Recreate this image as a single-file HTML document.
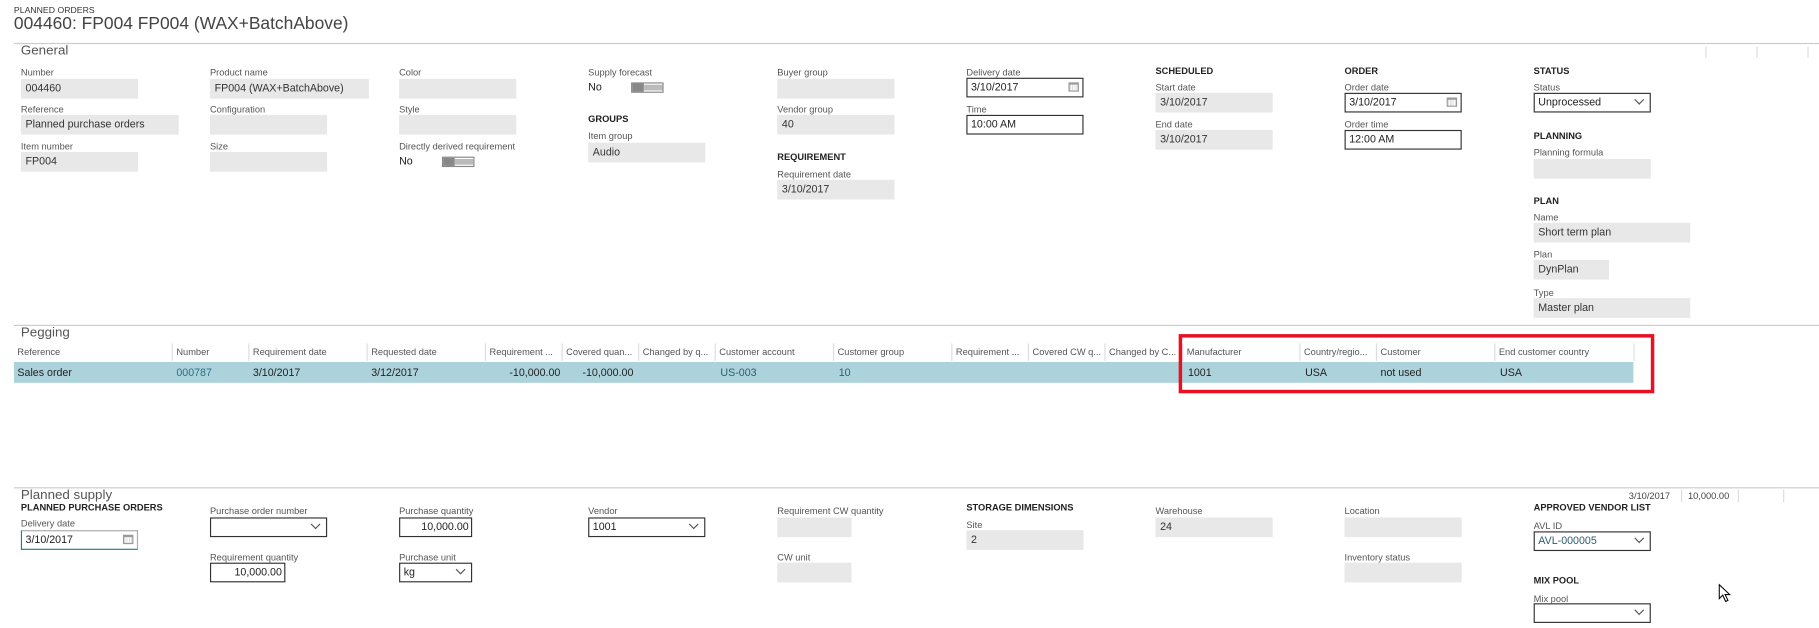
<!DOCTYPE html>
<html><head><meta charset="utf-8">
<style>
html,body{margin:0;padding:0;background:#fff;overflow:hidden;width:1819px;height:627px}
#w{position:absolute;left:0;top:0;width:1568px;height:541px;transform:scale(1.1601);transform-origin:0 0;font-family:"Liberation Sans",sans-serif;color:#222}
#w div{position:absolute;white-space:nowrap}
.l{font-size:8px;color:#555;line-height:10px}
.h{font-size:8px;font-weight:bold;color:#222;line-height:10px}
.b{background:#e8e8e8;height:17px;font-size:9.2px;line-height:17px;padding-left:4px;box-sizing:border-box;color:#333}
.i{border:1px solid #333;height:17px;font-size:9.2px;line-height:15px;padding-left:3px;box-sizing:border-box;background:#fff}
.hr{height:1px;background:#ccc}
.sec{font-size:11.5px;color:#555}
.cal{right:3px;top:3px;width:9px;height:8px;border:1px solid #999;border-top:2px solid #999;box-sizing:border-box;background:repeating-linear-gradient(90deg,#ddd 0 1px,#fff 1px 2px)}
.dd{right:6px;top:2px;width:5px;height:5px;border-right:1px solid #555;border-bottom:1px solid #555;transform:rotate(45deg)}
.tg{width:28px;height:9px;border:1px solid #888;box-sizing:border-box}
.tg::before{content:"";position:absolute;left:0;top:0;width:10px;height:7px;background:#888}
.tg::after{content:"";position:absolute;left:10px;top:1px;width:16px;height:5px;background:#bbb}
.gh{font-size:8px;color:#555;top:296px;height:15px;line-height:15px;border-left:1px solid #ddd;padding-left:3px}
.gr{font-size:9.2px;top:312px;height:18px;line-height:18px}
</style></head><body><div id="w">
<div class="l" style="left:12px;top:4px;font-size:7.5px;color:#333">PLANNED ORDERS</div>
<div style="left:12px;top:12px;font-size:15px;color:#444">004460: FP004 FP004 (WAX+BatchAbove)</div>
<div class="hr" style="left:12px;top:37px;width:1556px"></div>
<div class="sec" style="left:18px;top:38px">General</div>
<div style="left:1470px;top:40px;width:1px;height:10px;background:#ddd"></div>
<div style="left:1514px;top:40px;width:1px;height:10px;background:#ddd"></div>
<div style="left:1558px;top:40px;width:1px;height:10px;background:#ddd"></div>

<div class="l" style="left:18px;top:58px">Number</div><div class="b" style="left:18px;top:68px;width:101px">004460</div>
<div class="l" style="left:18px;top:90px">Reference</div><div class="b" style="left:18px;top:99px;width:136px">Planned purchase orders</div>
<div class="l" style="left:18px;top:122px">Item number</div><div class="b" style="left:18px;top:131px;width:101px">FP004</div>

<div class="l" style="left:181px;top:58px">Product name</div><div class="b" style="left:181px;top:68px;width:137px">FP004 (WAX+BatchAbove)</div>
<div class="l" style="left:181px;top:90px">Configuration</div><div class="b" style="left:181px;top:99px;width:101px"></div>
<div class="l" style="left:181px;top:122px">Size</div><div class="b" style="left:181px;top:131px;width:101px"></div>

<div class="l" style="left:344px;top:58px">Color</div><div class="b" style="left:344px;top:68px;width:101px"></div>
<div class="l" style="left:344px;top:90px">Style</div><div class="b" style="left:344px;top:99px;width:101px"></div>
<div class="l" style="left:344px;top:122px">Directly derived requirement</div>
<div style="left:344px;top:134px;font-size:9.2px">No</div><div class="tg" style="left:381px;top:135px"></div>

<div class="l" style="left:507px;top:58px">Supply forecast</div>
<div style="left:507px;top:70px;font-size:9.2px">No</div><div class="tg" style="left:544px;top:71px"></div>
<div class="h" style="left:507px;top:98px">GROUPS</div>
<div class="l" style="left:507px;top:113px">Item group</div><div class="b" style="left:507px;top:123px;width:101px">Audio</div>

<div class="l" style="left:670px;top:58px">Buyer group</div><div class="b" style="left:670px;top:68px;width:101px"></div>
<div class="l" style="left:670px;top:90px">Vendor group</div><div class="b" style="left:670px;top:99px;width:101px">40</div>
<div class="h" style="left:670px;top:131px">REQUIREMENT</div>
<div class="l" style="left:670px;top:146px">Requirement date</div><div class="b" style="left:670px;top:155px;width:101px">3/10/2017</div>

<div class="l" style="left:833px;top:58px">Delivery date</div><div class="i" style="left:833px;top:67px;width:101px">3/10/2017<div class="cal"></div></div>
<div class="l" style="left:833px;top:90px">Time</div><div class="i" style="left:833px;top:99px;width:101px">10:00 AM</div>

<div class="h" style="left:996px;top:57px">SCHEDULED</div>
<div class="l" style="left:996px;top:71px">Start date</div><div class="b" style="left:996px;top:80px;width:101px">3/10/2017</div>
<div class="l" style="left:996px;top:103px">End date</div><div class="b" style="left:996px;top:112px;width:101px">3/10/2017</div>

<div class="h" style="left:1159px;top:57px">ORDER</div>
<div class="l" style="left:1159px;top:71px">Order date</div><div class="i" style="left:1159px;top:80px;width:101px">3/10/2017<div class="cal"></div></div>
<div class="l" style="left:1159px;top:103px">Order time</div><div class="i" style="left:1159px;top:112px;width:101px">12:00 AM</div>

<div class="h" style="left:1322px;top:57px">STATUS</div>
<div class="l" style="left:1322px;top:71px">Status</div><div class="i" style="left:1322px;top:80px;width:101px">Unprocessed<div class="dd"></div></div>
<div class="h" style="left:1322px;top:113px">PLANNING</div>
<div class="l" style="left:1322px;top:127px">Planning formula</div><div class="b" style="left:1322px;top:137px;width:101px"></div>
<div class="h" style="left:1322px;top:169px">PLAN</div>
<div class="l" style="left:1322px;top:183px">Name</div><div class="b" style="left:1322px;top:192px;width:135px">Short term plan</div>
<div class="l" style="left:1322px;top:215px">Plan</div><div class="b" style="left:1322px;top:224px;width:65px">DynPlan</div>
<div class="l" style="left:1322px;top:248px">Type</div><div class="b" style="left:1322px;top:257px;width:135px">Master plan</div>

<div class="hr" style="left:12px;top:280px;width:1556px"></div>
<div class="sec" style="left:18px;top:281px">Pegging</div>
<div style="left:12px;top:312px;width:1396px;height:18px;background:#acd3db"></div>
<div class="gh" style="left:12px;border:0">Reference</div>
<div class="gh" style="left:148px">Number</div>
<div class="gh" style="left:214px">Requirement date</div>
<div class="gh" style="left:316px">Requested date</div>
<div class="gh" style="left:418px">Requirement ...</div>
<div class="gh" style="left:484px">Covered quan...</div>
<div class="gh" style="left:550px">Changed by q...</div>
<div class="gh" style="left:616px">Customer account</div>
<div class="gh" style="left:718px">Customer group</div>
<div class="gh" style="left:820px">Requirement ...</div>
<div class="gh" style="left:886px">Covered CW q...</div>
<div class="gh" style="left:952px">Changed by C...</div>
<div class="gh" style="left:1019px">Manufacturer</div>
<div class="gh" style="left:1120px">Country/regio...</div>
<div class="gh" style="left:1186px">Customer</div>
<div class="gh" style="left:1288px">End customer country</div>
<div style="left:1408px;top:296px;width:1px;height:15px;background:#ddd"></div>
<div class="gr" style="left:15px">Sales order</div>
<div class="gr" style="left:152px;color:#2c6f86">000787</div>
<div class="gr" style="left:218px">3/10/2017</div>
<div class="gr" style="left:320px">3/12/2017</div>
<div class="gr" style="left:430px;width:53px;text-align:right">-10,000.00</div>
<div class="gr" style="left:493px;width:53px;text-align:right">-10,000.00</div>
<div class="gr" style="left:621px;color:#2c5f70">US-003</div>
<div class="gr" style="left:723px;color:#2c5f70">10</div>
<div class="gr" style="left:1024px">1001</div>
<div class="gr" style="left:1125px">USA</div>
<div class="gr" style="left:1190px">not used</div>
<div class="gr" style="left:1293px">USA</div>
<div style="left:1016px;top:288px;width:410px;height:51px;border:3px solid #e81123;box-sizing:border-box"></div>

<div class="hr" style="left:12px;top:420px;width:1556px"></div>
<div class="sec" style="left:18px;top:421px">Planned supply</div>
<div style="left:1404px;top:423px;font-size:8px;color:#444">3/10/2017</div>
<div style="left:1449px;top:422px;width:1px;height:11px;background:#ddd"></div>
<div style="left:1455px;top:423px;font-size:8px;color:#444">10,000.00</div>
<div style="left:1498px;top:422px;width:1px;height:11px;background:#ddd"></div>
<div style="left:1537px;top:422px;width:1px;height:11px;background:#ddd"></div>

<div class="h" style="left:18px;top:433px">PLANNED PURCHASE ORDERS</div>
<div class="l" style="left:18px;top:447px">Delivery date</div>
<div class="i" style="left:18px;top:457px;width:101px;border-color:#aaa;border-bottom:1px solid #1e7f8e;border-left:1px solid #1e7f8e">3/10/2017<div class="cal"></div></div>

<div class="l" style="left:181px;top:436px">Purchase order number</div><div class="i" style="left:181px;top:446px;width:101px"><div class="dd"></div></div>
<div class="l" style="left:181px;top:476px">Requirement quantity</div><div class="i" style="left:181px;top:485px;width:65px;text-align:right;padding-right:2px">10,000.00</div>

<div class="l" style="left:344px;top:436px">Purchase quantity</div><div class="i" style="left:344px;top:446px;width:63px;text-align:right;padding-right:2px">10,000.00</div>
<div class="l" style="left:344px;top:476px">Purchase unit</div><div class="i" style="left:344px;top:485px;width:63px">kg<div class="dd"></div></div>

<div class="l" style="left:507px;top:436px">Vendor</div><div class="i" style="left:507px;top:446px;width:101px">1001<div class="dd"></div></div>

<div class="l" style="left:670px;top:436px">Requirement CW quantity</div><div class="b" style="left:670px;top:446px;width:64px"></div>
<div class="l" style="left:670px;top:476px">CW unit</div><div class="b" style="left:670px;top:485px;width:64px"></div>

<div class="h" style="left:833px;top:433px">STORAGE DIMENSIONS</div>
<div class="l" style="left:833px;top:448px">Site</div><div class="b" style="left:833px;top:457px;width:101px">2</div>

<div class="l" style="left:996px;top:436px">Warehouse</div><div class="b" style="left:996px;top:446px;width:101px">24</div>
<div class="l" style="left:1159px;top:436px">Location</div><div class="b" style="left:1159px;top:446px;width:101px"></div>
<div class="l" style="left:1159px;top:476px">Inventory status</div><div class="b" style="left:1159px;top:485px;width:101px"></div>

<div class="h" style="left:1322px;top:433px">APPROVED VENDOR LIST</div>
<div class="l" style="left:1322px;top:449px">AVL ID</div><div class="i" style="left:1322px;top:458px;width:101px;color:#2c5f70">AVL-000005<div class="dd"></div></div>
<div class="h" style="left:1322px;top:496px">MIX POOL</div>
<div class="l" style="left:1322px;top:512px">Mix pool</div><div class="i" style="left:1322px;top:520px;width:101px"><div class="dd"></div></div>

<svg style="position:absolute;left:1481px;top:503px" width="12" height="18" viewBox="0 0 12 18"><path d="M1 1 L1 13 L4 10 L6.5 15.5 L8.5 14.5 L6 9.5 L10 9.5 Z" fill="#fff" stroke="#000" stroke-width="0.9"/></svg>
</div></body></html>
